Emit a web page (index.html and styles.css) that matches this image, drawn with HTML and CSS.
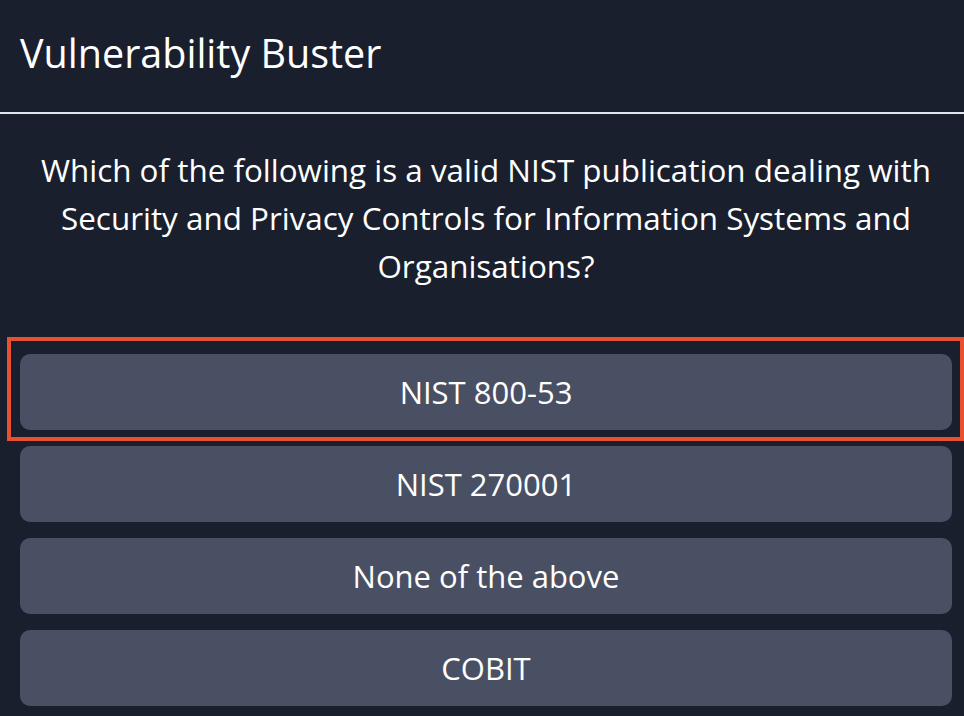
FILE: index.html
```html
<!DOCTYPE html>
<html>
<head>
<meta charset="utf-8">
<link rel="stylesheet" href="styles.css">
</head>
<body>
<header class="header">
  <h1 class="title">Vulnerability Buster</h1>
</header>
<main class="quiz">
  <p class="question">Which of the following is a valid NIST publication dealing with Security and Privacy Controls for Information Systems and Organisations?</p>
  <div class="answers">
    <button class="answer answer-highlight">NIST 800-53</button>
    <button class="answer">NIST 270001</button>
    <button class="answer">None of the above</button>
    <button class="answer">COBIT</button>
  </div>
</main>
</body>
</html>
```
FILE: styles.css
```css
html, body {
  margin: 0;
  padding: 0;
  background: #1a1f2d;
  color: #ffffff;
  font-family: "Open Sans", "Noto Sans", sans-serif;
  height: 716px;
  overflow: hidden;
}
.header {
  height: 112px;
  border-bottom: 2px solid #e2e6ec;
  display: flex;
  align-items: center;
  padding: 0 20px;
  box-sizing: content-box;
}
.title {
  margin: 0;
  font-size: 39.5px;
  font-weight: 400;
  line-height: 1;
  padding-bottom: 4px;
}
.quiz {
  padding: 32px 12px 0 20px;
}
.question {
  margin: 0 0 64px;
  text-align: center;
  font-size: 31.4px;
  line-height: 48px;
  padding: 0 4px;
}
.answers {
  display: flex;
  flex-direction: column;
  gap: 16px;
}
.answer {
  height: 76px;
  border: none;
  border-radius: 10px;
  background: #4a5063;
  color: #ffffff;
  font-family: inherit;
  font-size: 31px;
  padding: 0;
  position: relative;
}
.answer-highlight::after {
  content: "";
  position: absolute;
  left: -13px;
  right: -12px;
  top: -17px;
  bottom: -11px;
  border: 4px solid #e8502f;
  pointer-events: none;
}
```
